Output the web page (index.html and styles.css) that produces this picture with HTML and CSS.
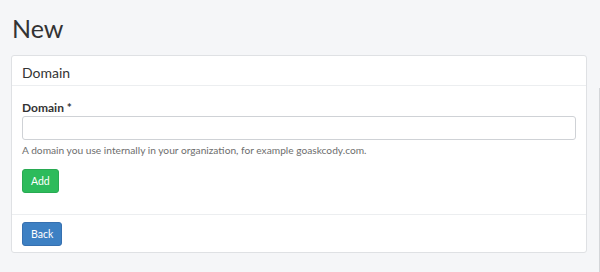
FILE: index.html
```html
<!DOCTYPE html>
<html lang="en">
<head>
<meta charset="utf-8">
<title>New</title>
<link rel="stylesheet" href="styles.css">
</head>
<body>
<div class="page">
  <h1 class="title">New</h1>
  <div class="card">
    <div class="card-header">Domain</div>
    <div class="card-body">
      <label class="field-label" for="domain">Domain *</label>
      <input class="field-input" id="domain" type="text">
      <p class="help">A domain you use internally in your organization, for example goaskcody.com.</p>
      <button class="btn btn-add" type="button">Add</button>
    </div>
    <div class="card-footer">
      <button class="btn btn-back" type="button">Back</button>
    </div>
  </div>
</div>
<div class="scroll-thumb"></div>
</body>
</html>
```

FILE: styles.css
```css
html, body {
  margin: 0;
  padding: 0;
}
body {
  background: #f5f6f8;
  font-family: Lato, "Open Sans", "Liberation Sans", sans-serif;
  color: #333;
  width: 600px;
  height: 272px;
  overflow: hidden;
  position: relative;
}
.page {
  padding: 10px 13px 0 11px;
}
.title {
  margin: 0 0 9px 0;
  font-size: 25px;
  line-height: 36px;
  font-weight: 400;
  color: #333;
  padding-left: 1px;
}
.card {
  background: #fff;
  border: 1px solid #dfe1e4;
  border-radius: 3px;
}
.card-header {
  padding: 6px 10px 2px;
  font-size: 14px;
  line-height: 21px;
  border-bottom: 1px solid #eceef0;
  color: #333;
}
.card-body {
  padding: 13px 10px 21px;
  display: flex;
  flex-direction: column;
  align-items: flex-start;
}
.field-label {
  font-size: 12px;
  line-height: 17px;
  font-weight: 700;
  color: #333;
}
.field-input {
  box-sizing: border-box;
  width: 100%;
  height: 24px;
  margin: 0;
  border: 1px solid #cfd2d6;
  border-radius: 3px;
  background: #fff;
  outline: none;
}
.help {
  margin: 2px 0 10px 0;
  font-size: 10.2px;
  line-height: 17px;
  color: #6e6e6e;
}
.btn {
  box-sizing: border-box;
  height: 24px;
  padding: 0 8px;
  border-radius: 3px;
  font-family: inherit;
  font-size: 10.5px;
  color: #fff;
  cursor: pointer;
}
.btn-add {
  background: #2dbb5b;
  border: 1px solid #28aa52;
}
.btn-back {
  background: #3d80c3;
  border: 1px solid #3670b0;
}
.card-footer {
  padding: 7px 10px 6px;
  border-top: 1px solid #eceef0;
}
.scroll-thumb {
  position: absolute;
  right: 0;
  top: 88px;
  bottom: 0;
  width: 1px;
  background: #d4d6d9;
}
```
